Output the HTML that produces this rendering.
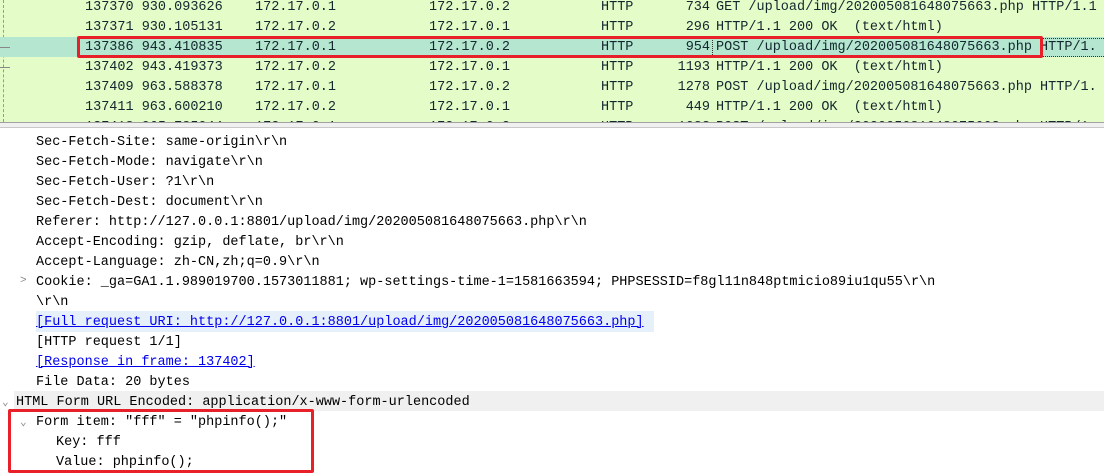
<!DOCTYPE html>
<html><head><style>
*{margin:0;padding:0;box-sizing:border-box}
body{width:1104px;height:475px;overflow:hidden;background:#fff;font-family:"Liberation Mono",monospace;font-size:13.5px;color:#12272e;position:relative}
.list{position:absolute;left:0;top:0;width:1104px;height:122px;background:#e4fcc8;overflow:hidden}
.r{position:absolute;left:0;width:1104px;height:20px;line-height:22px;white-space:pre}
.r span{position:absolute;top:0}
.r span.n{right:394px;text-align:right}
.sel{background:#b4e6d0}
.div{position:absolute;left:0;top:122px;width:1104px;height:6px;background:#f0f0f0;border-top:1px solid #a0a0a0;border-bottom:1px solid #c8c8c8}
.d{position:absolute;height:20px;line-height:24px;white-space:pre;color:#000}
.lk{color:#0000ee;text-decoration:underline}
.box{position:absolute;border:3px solid #e8202a;border-radius:2px}
.arr{position:absolute;color:#888;font-size:11px}
</style></head><body>
<div class="list">
<div style="position:absolute;left:3px;top:0;height:122px;border-left:1px dashed #999"></div>
<div class="r" style="top:-3px"><span style="left:85px">137370 930.093626</span><span style="left:255px">172.17.0.1</span><span style="left:429px">172.17.0.2</span><span style="left:601px">HTTP</span><span class="n">734</span><span style="left:716px">GET /upload/img/202005081648075663.php HTTP/1.1</span></div>
<div class="r" style="top:17px"><span style="left:85px">137371 930.105131</span><span style="left:255px">172.17.0.2</span><span style="left:429px">172.17.0.1</span><span style="left:601px">HTTP</span><span class="n">296</span><span style="left:716px">HTTP/1.1 200 OK  (text/html)</span></div>
<div class="r sel" style="top:37px"><span style="left:85px">137386 943.410835</span><span style="left:255px">172.17.0.1</span><span style="left:429px">172.17.0.2</span><span style="left:601px">HTTP</span><span class="n">954</span><span style="left:716px">POST /upload/img/202005081648075663.php HTTP/1.</span></div>
<div class="r" style="top:57px"><span style="left:85px">137402 943.419373</span><span style="left:255px">172.17.0.2</span><span style="left:429px">172.17.0.1</span><span style="left:601px">HTTP</span><span class="n">1193</span><span style="left:716px">HTTP/1.1 200 OK  (text/html)</span></div>
<div class="r" style="top:77px"><span style="left:85px">137409 963.588378</span><span style="left:255px">172.17.0.1</span><span style="left:429px">172.17.0.2</span><span style="left:601px">HTTP</span><span class="n">1278</span><span style="left:716px">POST /upload/img/202005081648075663.php HTTP/1.</span></div>
<div class="r" style="top:97px"><span style="left:85px">137411 963.600210</span><span style="left:255px">172.17.0.2</span><span style="left:429px">172.17.0.1</span><span style="left:601px">HTTP</span><span class="n">449</span><span style="left:716px">HTTP/1.1 200 OK  (text/html)</span></div>
<div class="r" style="top:117px"><span style="left:85px">137418 965.785044</span><span style="left:255px">172.17.0.1</span><span style="left:429px">172.17.0.2</span><span style="left:601px">HTTP</span><span class="n">1083</span><span style="left:716px">POST /upload/img/202005081648075663.php HTTP/1.</span></div>
<div style="position:absolute;left:1042px;top:38px;width:62px;height:19px;border:1px dotted #333;border-right:none"></div>
<div style="position:absolute;left:712px;top:38px;height:19px;border-left:1px dotted #333"></div>
<div style="position:absolute;left:0;top:47px;width:10px;border-top:1px solid #888"></div>
<div style="position:absolute;left:0;top:67px;width:10px;border-top:1px solid #888"></div>
</div>
<div class="div"></div>
<div class="d" style="left:36px;top:131px">Sec-Fetch-Site: same-origin\r\n</div>
<div class="d" style="left:36px;top:151px">Sec-Fetch-Mode: navigate\r\n</div>
<div class="d" style="left:36px;top:171px">Sec-Fetch-User: ?1\r\n</div>
<div class="d" style="left:36px;top:191px">Sec-Fetch-Dest: document\r\n</div>
<div class="d" style="left:36px;top:211px">Referer: http://127.0.0.1:8801/upload/img/202005081648075663.php\r\n</div>
<div class="d" style="left:36px;top:231px">Accept-Encoding: gzip, deflate, br\r\n</div>
<div class="d" style="left:36px;top:251px">Accept-Language: zh-CN,zh;q=0.9\r\n</div>
<div class="arr" style="left:20px;top:275px">&gt;</div>
<div class="d" style="left:36px;top:271px">Cookie: _ga=GA1.1.989019700.1573011881; wp-settings-time-1=1581663594; PHPSESSID=f8gl11n848ptmicio89iu1qu55\r\n</div>
<div class="d" style="left:36px;top:291px">\r\n</div>
<div class="d lk" style="left:36px;top:311px;background:#e6f0fb;width:618px;height:21px">[Full request URI: http://127.0.0.1:8801/upload/img/202005081648075663.php]</div>
<div class="d" style="left:36px;top:331px">[HTTP request 1/1]</div>
<div class="d lk" style="left:36px;top:351px">[Response in frame: 137402]</div>
<div class="d" style="left:36px;top:371px">File Data: 20 bytes</div>
<div style="position:absolute;left:14px;top:391px;width:1090px;height:20px;background:#f0f0f0"></div>
<div class="arr" style="left:2px;top:395px">&#8964;</div>
<div class="d" style="left:16px;top:391px;height:20px;overflow:visible">HTML Form URL Encoded: application/x-www-form-urlencoded</div>
<div class="arr" style="left:20px;top:415px">&#8964;</div>
<div class="d" style="left:36px;top:411px">Form item: "fff" = "phpinfo();"</div>
<div class="d" style="left:56px;top:431px">Key: fff</div>
<div class="d" style="left:56px;top:451px">Value: phpinfo();</div>
<div class="box" style="left:77px;top:36px;width:966px;height:22px"></div>
<div class="box" style="left:8px;top:409px;width:306px;height:64px"></div>
</body></html>
